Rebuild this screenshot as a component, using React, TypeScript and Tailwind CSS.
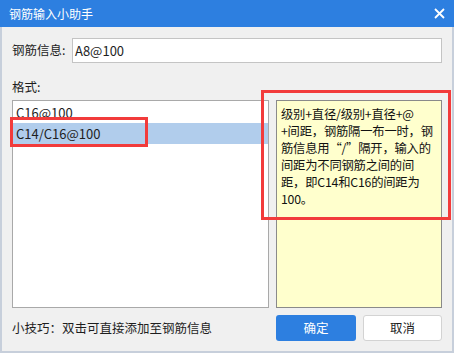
import React from 'react';

const font = { fontFamily: '"Noto Sans CJK SC", "Noto Sans", sans-serif' };

const descLines = [
  '级别+直径/级别+直径+@',
  '+间距，钢筋隔一布一时，钢',
  '筋信息用“/”隔开，输入的',
  '间距为不同钢筋之间的间',
  '距，即C14和C16的间距为',
  '100。',
];

const App: React.FC = () => {
  return (
    <div className="relative w-[454px] h-[353px] flex flex-col bg-[#f0f0f0] text-[12px] text-[#1e1e1e]" style={font}>
      <div className="h-[27px] shrink-0 bg-[#2d7fe0] flex items-center justify-between pl-[9px] pr-[9px] text-white">
        <span className="text-[12px] leading-none">钢筋输入小助手</span>
        <svg width="11" height="11" viewBox="0 0 11 11">
          <path d="M1 1 L10 10 M10 1 L1 10" stroke="white" strokeWidth="1.8" />
        </svg>
      </div>

      <div className="flex-1 flex flex-col border-x-2 border-b-2 border-[#c7cfdb] px-[10px] pt-[11px]">
        <div className="h-[25px] flex items-center">
          <span className="w-[60px] shrink-0 text-[12.5px]">钢筋信息:</span>
          <div className="flex-1 h-full bg-white border border-[#c4c4c4] flex items-center px-[2px] text-[13px]">A8@100</div>
        </div>

        <div className="mt-[17px] leading-[14px] text-[12.5px]">格式:</div>

        <div className="mt-[6px] h-[208px] flex gap-[7px]">
          <div className="w-[257px] h-full bg-white border border-[#a9a9a9] pt-[1px] text-[13px]">
            <div className="h-[21px] flex items-center pl-[3px]">C16@100</div>
            <div className="h-[21px] flex items-center pl-[3px] bg-[#b1cdec]">C14/C16@100</div>
          </div>
          <div className="w-[166px] h-full overflow-hidden bg-[#ffffcd] border border-[#8a8a8a] pl-[4px] pt-[5px] leading-[17px] whitespace-nowrap text-[12.3px] tracking-[-0.2px] text-[#111]">
            {descLines.map((l) => (
              <div key={l}>{l}</div>
            ))}
          </div>
        </div>

        <div className="mt-[7px] h-[26px] flex items-center">
          <span className="flex-1 text-[12.5px]">小技巧：双击可直接添加至钢筋信息</span>
          <button className="w-[80px] h-full rounded-[3px] bg-[#2d7fe0] text-white text-[12.5px]">确定</button>
          <button className="ml-[7px] w-[79px] h-full rounded-[3px] bg-white border border-[#d3d3d3] text-[12.5px]">取消</button>
        </div>
      </div>

      <div className="absolute left-[261px] top-[90px] w-[190px] h-[130px] border-[3px] border-[#f23b3b]" />
      <div className="absolute left-[10px] top-[117px] w-[138px] h-[30px] border-[3px] border-[#f23b3b]" />
    </div>
  );
};

export default App;
